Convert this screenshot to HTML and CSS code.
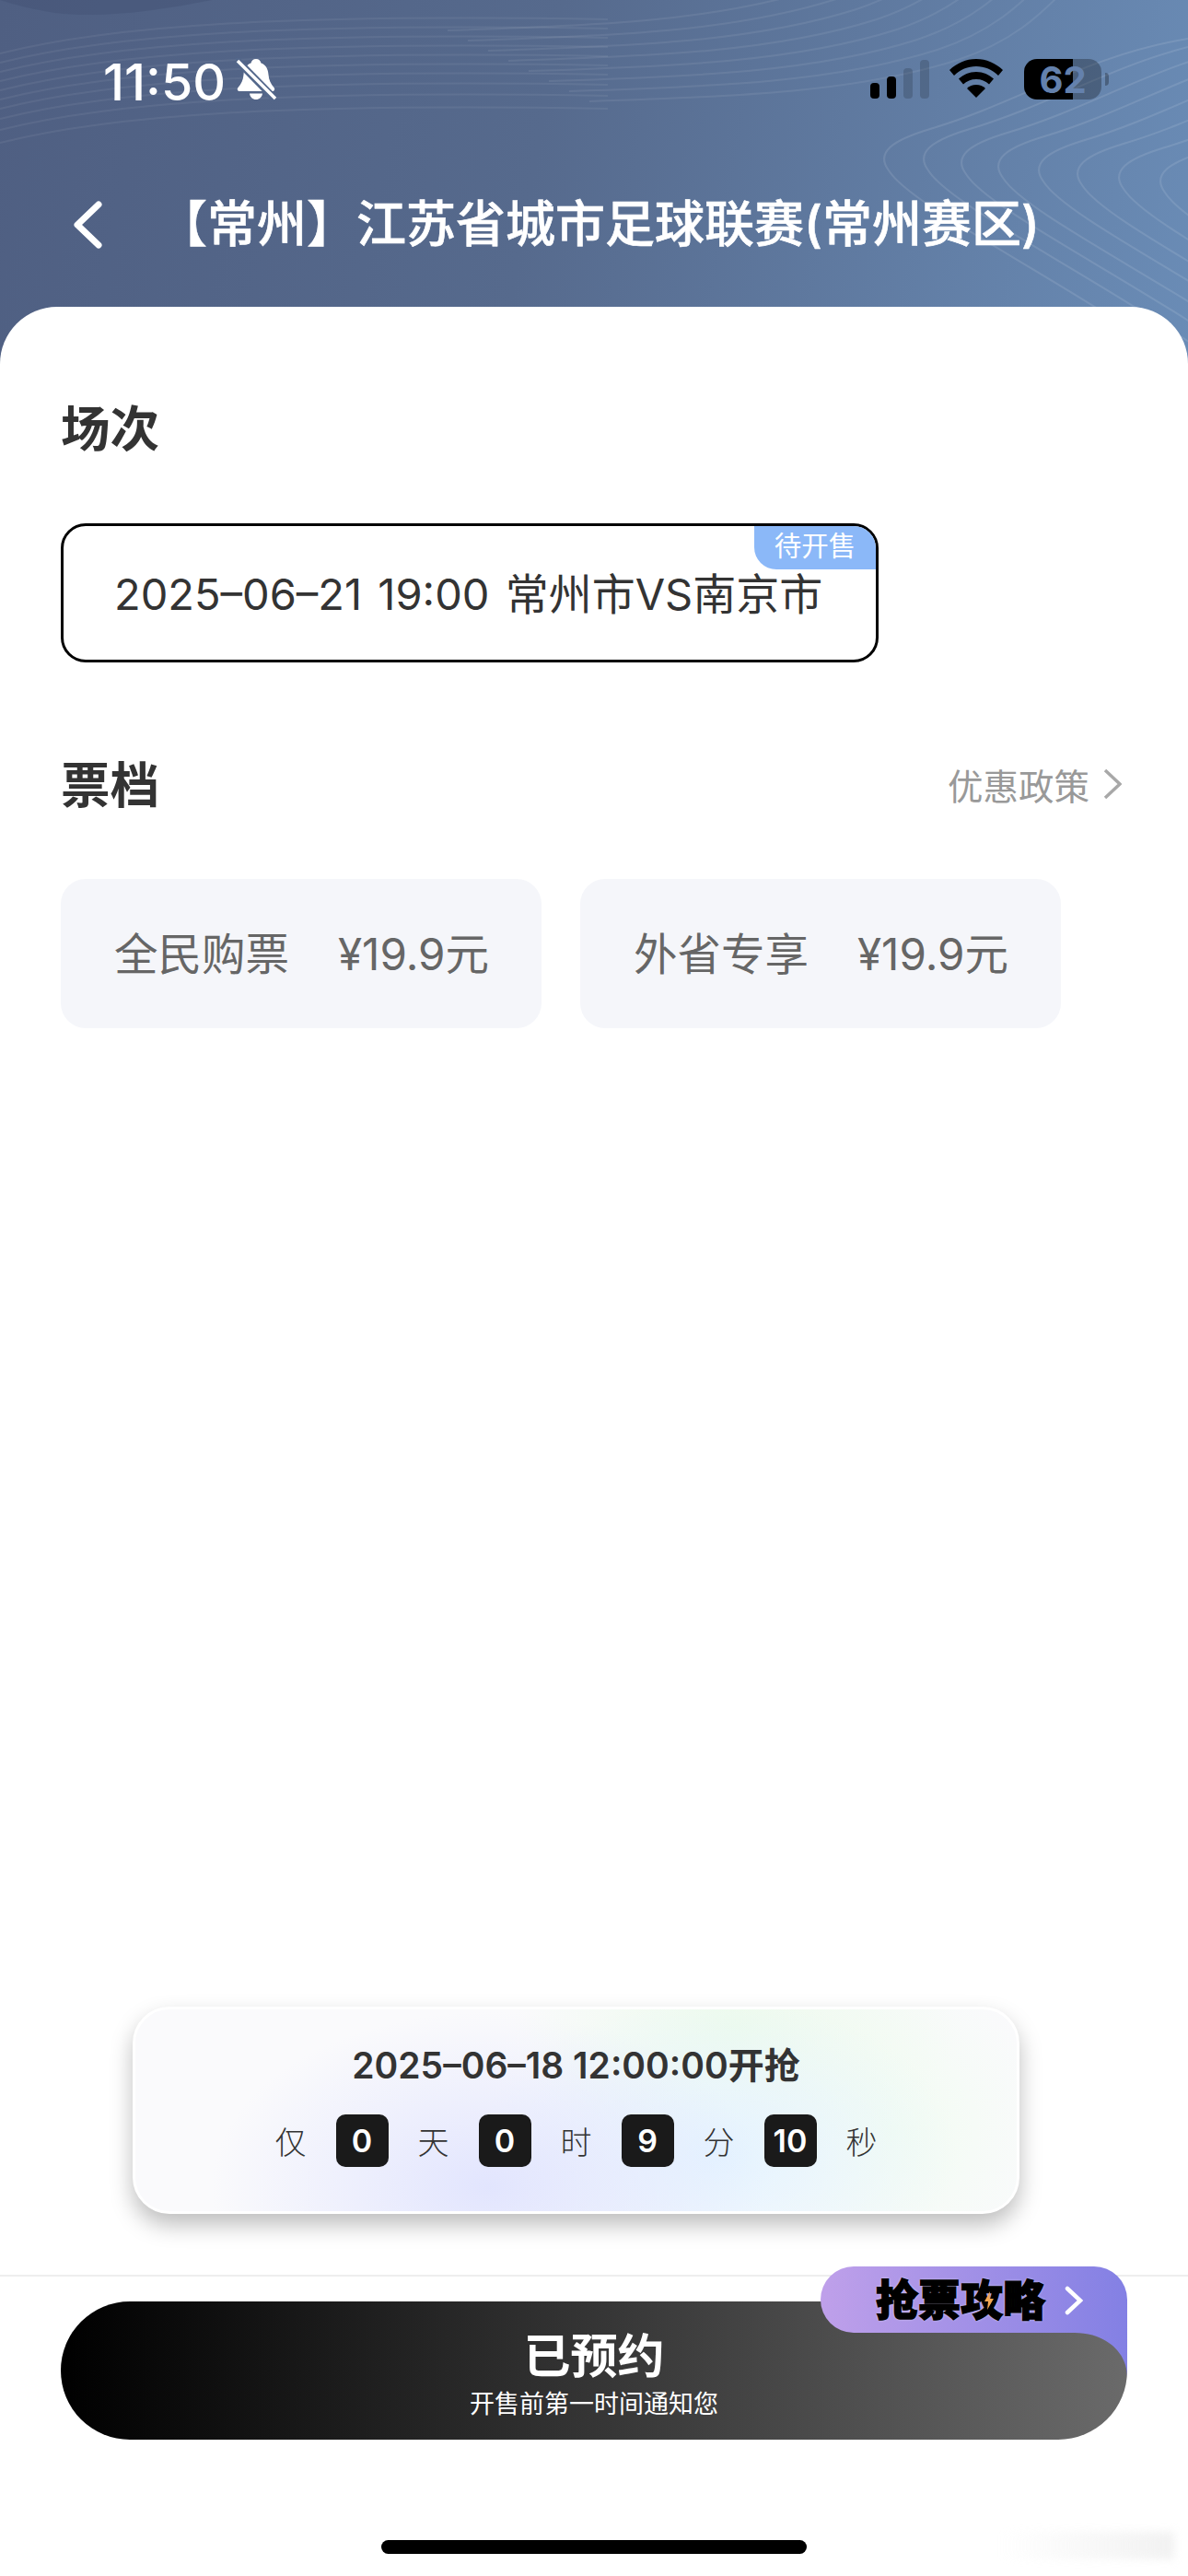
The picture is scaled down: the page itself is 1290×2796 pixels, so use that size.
FILE: index.html
```html
<!DOCTYPE html>
<html lang="zh-CN">
<head>
	<meta charset="UTF-8">
	<title>场次选择</title>
	<link rel="stylesheet" href="styles.css">
</head>
<body>
	<div class="screen">
		<!-- header waves -->
		<svg class="waves" width="1290" height="400" viewBox="0 0 1290 400" fill="none" stroke="#fff" stroke-width="2">
			<defs>
				<path id="waveRight" d="M1290 42C1180 60 1110 110 1010 140C970 152 950 165 965 185C990 225 1150 300 1290 400"/>
				<path id="waveTop" d="M640 110C800 105 930 100 1040 65C1100 45 1130 15 1150 -5"/>
				<path id="waveLeft" d="M0 155C120 125 300 112 660 118"/>
			</defs>
			<path fill="#3f4d70" opacity=".35" stroke="none" d="M0 0H230C170 12 110 20 60 14C35 10 15 5 0 0Z"/>
			<g opacity=".1">
				<use href="#waveRight"/>
				<use href="#waveRight" transform="translate(43 0)"/>
				<use href="#waveRight" transform="translate(84 4)"/>
				<use href="#waveRight" transform="translate(124 8)"/>
				<use href="#waveRight" transform="translate(168 12)"/>
				<use href="#waveRight" transform="translate(210 16)"/>
				<use href="#waveRight" transform="translate(255 20)"/>
				<use href="#waveRight" transform="translate(300 24)"/>
			</g>
			<g opacity=".07">
				<use href="#waveTop"/>
				<use href="#waveTop" transform="translate(-22 -11)"/>
				<use href="#waveTop" transform="translate(-44 -22)"/>
				<use href="#waveTop" transform="translate(-66 -33)"/>
				<use href="#waveTop" transform="translate(-88 -44)"/>
				<use href="#waveTop" transform="translate(-110 -55)"/>
				<use href="#waveTop" transform="translate(-132 -66)"/>
				<use href="#waveTop" transform="translate(-154 -77)"/>
			</g>
			<g opacity=".06">
				<use href="#waveLeft"/>
				<use href="#waveLeft" transform="translate(0 -14)"/>
				<use href="#waveLeft" transform="translate(0 -26)"/>
				<use href="#waveLeft" transform="translate(0 -37)"/>
				<use href="#waveLeft" transform="translate(0 -47)"/>
				<use href="#waveLeft" transform="translate(0 -57)"/>
				<use href="#waveLeft" transform="translate(0 -67)"/>
				<use href="#waveLeft" transform="translate(0 -77)"/>
				<use href="#waveLeft" transform="translate(0 -87)"/>
				<use href="#waveLeft" transform="translate(0 -97)"/>
			</g>
		</svg>

		<div class="status-bar">
			<div class="status-left">
				<span class="time">11:50</span>
				<svg class="bell" width="44" height="46" viewBox="0 0 44 46">
					<path fill="#fff" d="M22 1c3 0 5 2 5.500 4.500C33 7.500 35 12 35.500 18c.5 6 2.500 10 6 14 1.500 2 .5 4-2 4H4.500c-2.500 0-3.500-2-2-4 3.500-4 5.500-8 6-14C9 12 11 7.500 16.500 5.500 17 3 19 1 22 1zM15 38.500h14C28.500 42.500 25.500 45 22 45s-6.500-2.500-7-6.500z"/>
					<path stroke="#53678b" stroke-width="8" d="M-1 0L44 46"/>
					<path stroke="#fff" stroke-width="3.500" d="M2 3L43 44"/>
				</svg>
			</div>
			<div class="status-right">
				<div class="signal">
					<i class="bar bar-1"></i>
					<i class="bar bar-2"></i>
					<i class="bar bar-3"></i>
					<i class="bar bar-4"></i>
				</div>
				<svg class="wifi" width="58" height="42" viewBox="0 0 58 42">
					<path d="M29 0C18 0 8 4.500 0 12l5 6C11.500 11.500 20 8 29 8s17.500 3.500 24 10l5-6C50 4.500 40 0 29 0z"/>
					<path d="M29 14c-7.500 0-14 3-19 7.500l5 6c3.500-3.500 8.500-5.500 14-5.500s10.500 2 14 5.500l5-6C43 17 36.500 14 29 14z"/>
					<path d="M29 28c-4 0-7.500 1.500-10 4l10 10 10-10c-2.500-2.500-6-4-10-4z"/>
				</svg>
				<div class="battery">
					<div class="battery-body"><span>62</span></div>
					<i class="battery-cap"></i>
				</div>
			</div>
		</div>

		<div class="nav">
			<svg class="back" width="32" height="52" viewBox="0 0 32 52" fill="none" stroke="#fff" stroke-width="7" stroke-linecap="round" stroke-linejoin="round">
				<path d="M28 4L5 26L28 48"/>
			</svg>
			<h1 class="nav-title">【常州】江苏省城市足球联赛(常州赛区)</h1>
		</div>

		<div class="sheet">
			<h2 class="section-title session-title">场次</h2>
			<div class="session">
				<span>2025–06–21 19:00 常州市VS南京市</span>
				<span class="session-tag">待开售</span>
			</div>

			<div class="section-row">
				<h2 class="section-title">票档</h2>
				<div class="policy">
					<span>优惠政策</span>
					<svg width="20" height="34" viewBox="0 0 20 34" fill="none" stroke="#a8a8a8" stroke-width="3.500">
						<path d="M2 2L18 17L2 32"/>
					</svg>
				</div>
			</div>
			<div class="tickets">
				<div class="ticket"><span>全民购票</span><span>¥19.9元</span></div>
				<div class="ticket"><span>外省专享</span><span>¥19.9元</span></div>
			</div>

			<div class="countdown">
				<div class="countdown-title">2025–06–18 12:00:00开抢</div>
				<div class="countdown-row">
					<span>仅</span>
					<b class="digit">0</b>
					<span>天</span>
					<b class="digit">0</b>
					<span>时</span>
					<b class="digit">9</b>
					<span>分</span>
					<b class="digit">10</b>
					<span>秒</span>
				</div>
			</div>

			<div class="footer">
				<div class="buy">
					<div class="buy-main">已预约</div>
					<div class="buy-sub">开售前第一时间通知您</div>
					<div class="guide">
						<svg class="guide-bg" width="333" height="120" viewBox="0 0 333 120">
							<defs>
								<linearGradient id="guideFill" x1="0" x2="1" y1="0" y2="0">
									<stop offset="0" stop-color="#bfa0ea"/>
									<stop offset="1" stop-color="#8380e4"/>
								</linearGradient>
							</defs>
							<path fill="url(#guideFill)" d="M36 0H297A36 36 0 0 1 333 36V120C333 92 308 72 276 72H36A36 36 0 0 1 36 0Z"/>
						</svg>
						<span class="guide-text">抢票攻略</span>
						<svg class="bolt" width="10" height="20" viewBox="0 0 10 20">
							<path fill="#f2a650" d="M6 0L0 11h4l-1 9 7-12H5.500z"/>
						</svg>
						<svg class="guide-arrow" width="20" height="32" viewBox="0 0 20 32" fill="none" stroke="#fff" stroke-width="4.500" stroke-linecap="round">
							<path d="M3 3L17 16L3 29"/>
						</svg>
					</div>
				</div>
				<div class="home-bar"></div>
			</div>
		</div>
		<div class="smudge"></div>
	</div>
</body>
</html>
```

FILE: styles.css
```css
*{box-sizing:border-box;}
body{margin:0;font-family:Inter,"Noto Sans CJK SC",sans-serif;color:#333;}
h1,h2{margin:0;}

.screen{position:relative;display:flex;flex-direction:column;width:1290px;height:2796px;overflow:hidden;background:linear-gradient(100deg,#4f5f82 0%,#566a8d 45%,#6a8cb6 100%) no-repeat;background-size:100% 400px;}
.waves{position:absolute;left:0;top:0;}

/* status bar */
.status-bar{position:relative;display:flex;justify-content:space-between;height:184px;padding:63px 86px 0 112px;}
.status-left{display:flex;align-items:flex-start;gap:11px;}
.time{font-size:55.500px;line-height:52px;font-weight:500;color:#fff;}
.status-right{display:flex;align-items:flex-start;padding-top:1px;}
.signal{display:flex;align-items:flex-end;gap:8px;height:43px;margin-right:22px;}
.bar{display:block;width:10px;border-radius:4px;background:#000;}
.bar-1{height:17px;}
.bar-2{height:24px;}
.bar-3{height:33px;background:rgba(0,0,0,.16);}
.bar-4{height:42px;background:rgba(0,0,0,.16);}
.wifi{margin-right:23px;}
.battery{display:flex;align-items:center;height:44px;}
.battery-body{display:flex;justify-content:center;align-items:center;width:84px;height:44px;border-radius:14px;background:linear-gradient(90deg,#000 63%,rgba(0,0,0,.28) 63%);}
.battery-body span{font-size:40px;font-weight:700;color:#6481ad;}
.battery-cap{display:block;width:4px;height:14px;margin-left:4px;border-radius:0 4px 4px 0;background:rgba(0,0,0,.28);}

/* nav */
.nav{position:relative;display:flex;align-items:center;height:149px;padding:0 0 30px 79px;}
.nav-title{margin-left:60px;font-size:54px;line-height:60px;font-weight:500;-webkit-text-stroke:.6px #fff;color:#fff;white-space:nowrap;}

/* sheet */
.sheet{position:relative;display:flex;flex-direction:column;flex:1;padding:0 66px;border-radius:62px 62px 0 0;background:#fff;}
.section-title{font-size:53.500px;line-height:60px;font-weight:700;color:#333;}
.session-title{margin-top:103px;}

.session{position:relative;display:flex;align-items:center;width:888px;height:151px;margin-top:72px;padding:0 0 5px 55px;border:3px solid #000;border-radius:27px;font-size:47px;word-spacing:4px;color:#333;white-space:nowrap;overflow:hidden;}
.session-tag{position:absolute;top:0;right:0;width:132px;height:47px;border-bottom-left-radius:24px;background:#8bb8f8;font-size:29.500px;line-height:43px;text-align:center;color:#fff;}

.section-row{display:flex;justify-content:space-between;align-items:center;height:60px;margin-top:104px;padding-right:6px;}
.policy{display:flex;align-items:center;gap:15px;padding-bottom:4px;font-size:38.500px;color:#999;}

.tickets{display:flex;gap:42px;margin-top:71px;}
.ticket{display:flex;align-items:center;gap:53px;width:522px;height:162px;padding:0 0 5px 58px;border-radius:27px;background:#f5f6fa;font-size:47.500px;color:#666;}

/* countdown */
.countdown{display:flex;flex-direction:column;align-items:center;width:963px;height:225px;margin:auto 0 66px 78px;padding-top:37px;border:3px solid #fff;border-radius:40px;background:radial-gradient(ellipse 300px 190px at 40% 88%,#e2e5fe 0%,rgba(226,229,254,0) 100%),radial-gradient(ellipse 260px 170px at 66% 72%,#e4f3ff 0%,rgba(228,243,255,0) 100%),radial-gradient(ellipse 240px 150px at 68% 8%,#edfbec 0%,rgba(237,251,236,0) 100%),radial-gradient(ellipse 180px 180px at 86% 60%,#f2fcf2 0%,rgba(242,252,242,0) 100%),#fafafc;box-shadow:0 12px 24px rgba(0,0,0,.26);}
.countdown-title{font-size:39px;line-height:48px;font-weight:600;color:#333;}
.countdown-row{display:flex;align-items:center;gap:32px;margin-top:29px;font-size:34px;font-weight:300;color:#333;}
.digit{display:block;width:57px;height:57px;border-radius:10px;background:#1a1a1a;font-size:34px;line-height:57px;font-weight:600;text-align:center;color:#fff;}

/* footer */
.footer{display:flex;flex-direction:column;align-items:center;height:327px;margin:0 -66px;padding-top:27px;border-top:2px solid #eee;}
.buy{position:relative;width:1158px;height:150px;border-radius:75px;background:linear-gradient(90deg,#000 0%,#6a6a6a 100%);text-align:center;color:#fff;}
.buy-main{padding-top:30px;font-size:51px;line-height:60px;font-weight:700;}
.buy-sub{margin-top:4px;font-size:27px;line-height:36px;}
.guide{position:absolute;top:-38px;right:0;width:333px;height:120px;}
.guide-bg{display:block;}
.guide-text{position:absolute;left:60px;top:10px;font-size:46px;line-height:52px;font-weight:900;color:#000;-webkit-text-stroke:1.500px #000;text-shadow:0 0 3px #fff;white-space:nowrap;}
.bolt{position:absolute;left:178px;top:27px;}
.guide-arrow{position:absolute;left:265px;top:21px;}
.home-bar{width:462px;height:15px;margin-top:109px;border-radius:8px;background:#000;}

.smudge{position:absolute;left:1085px;top:2748px;width:190px;height:30px;background:linear-gradient(90deg,rgba(240,240,240,0),#e9e9e9);filter:blur(5px);opacity:.6;}
```
